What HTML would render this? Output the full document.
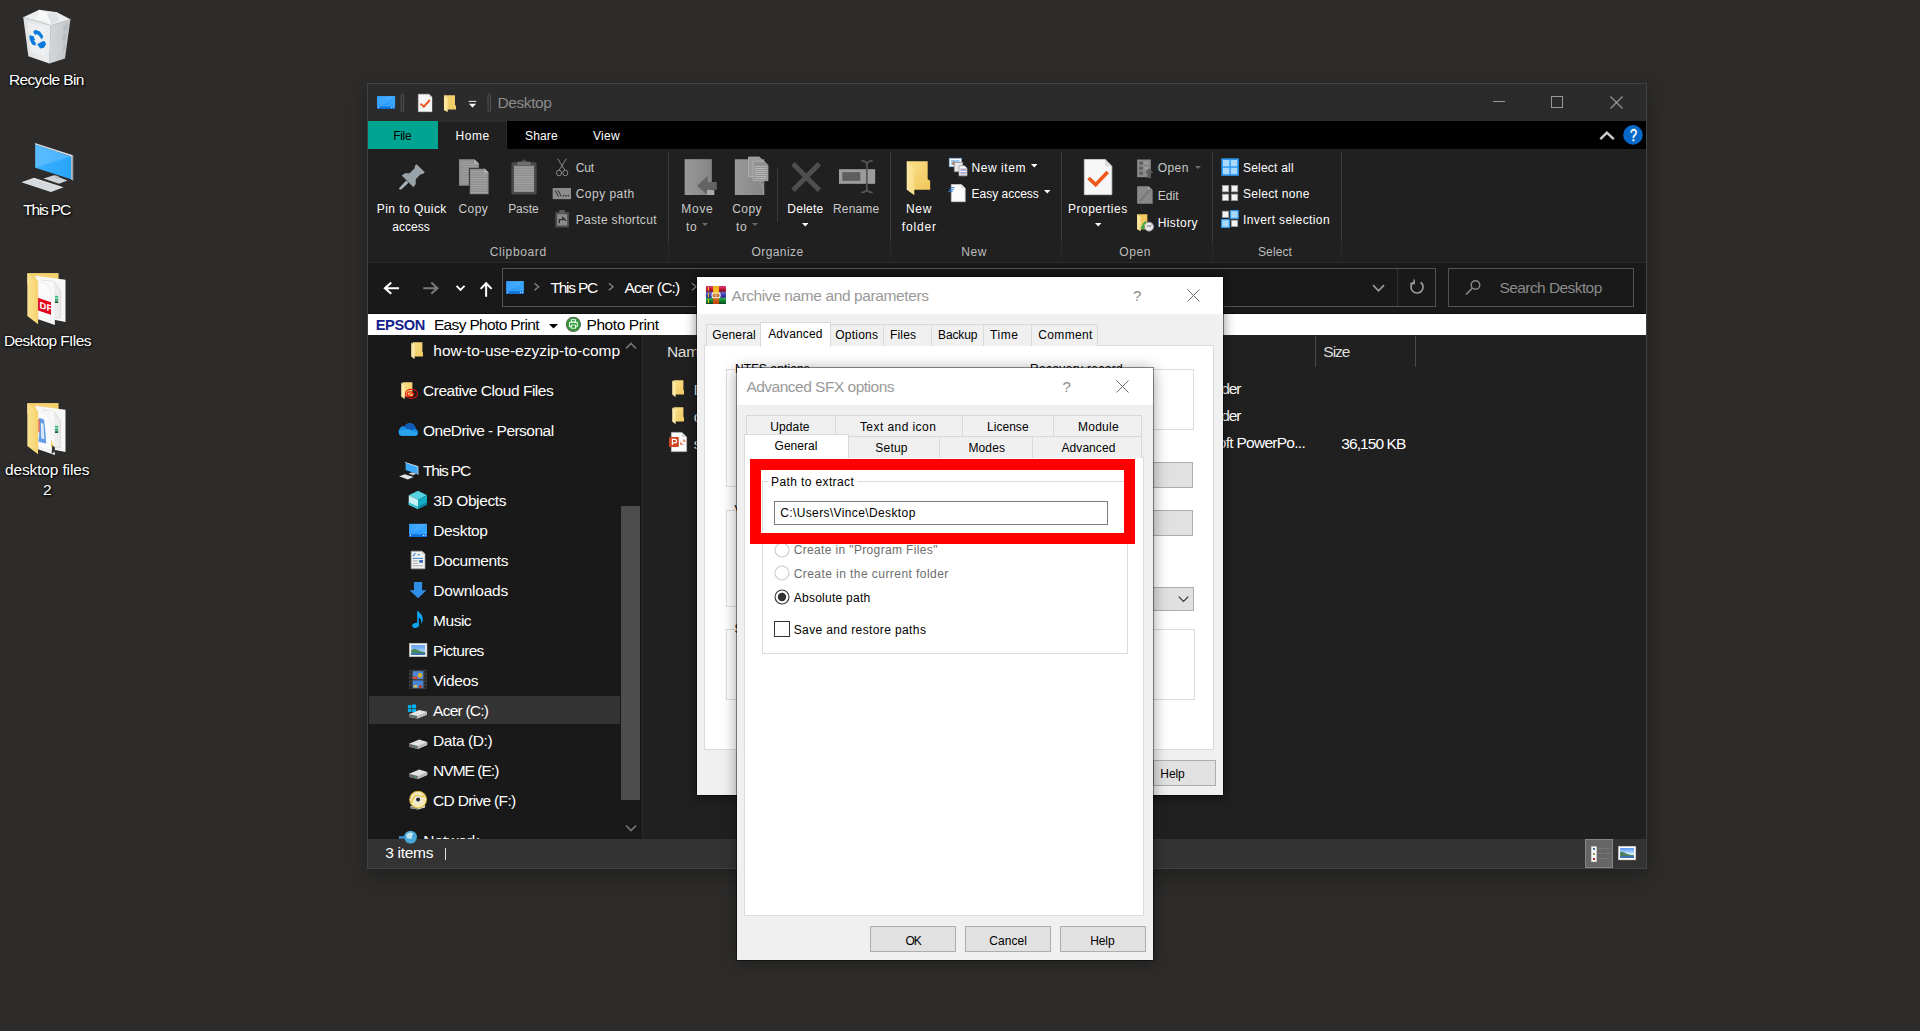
<!DOCTYPE html>
<html><head><meta charset="utf-8"><title>Desktop</title>
<style>
html,body{margin:0;padding:0;}
body{width:1920px;height:1031px;overflow:hidden;background:#2d2c2b;font-family:"Liberation Sans", sans-serif;position:relative;}
div,svg,span.t{position:absolute;box-sizing:border-box;}
span.t{white-space:pre;line-height:20px;height:20px;}
.win{overflow:hidden;}
</style></head><body>
<span class="t" style="left:9.00px;top:70.33px;font-size:15.5px;color:#ffffff;letter-spacing:-0.649px;text-shadow:1px 1px 2px #000,0 0 3px rgba(0,0,0,.8);">Recycle Bin</span>
<span class="t" style="left:23.20px;top:200.43px;font-size:15.5px;color:#ffffff;letter-spacing:-1.200px;text-shadow:1px 1px 2px #000,0 0 3px rgba(0,0,0,.8);">This PC</span>
<span class="t" style="left:4.00px;top:331.03px;font-size:15.5px;color:#ffffff;letter-spacing:-0.613px;text-shadow:1px 1px 2px #000,0 0 3px rgba(0,0,0,.8);">Desktop FIles</span>
<span class="t" style="left:5.00px;top:460.13px;font-size:15.5px;color:#ffffff;letter-spacing:-0.144px;text-shadow:1px 1px 2px #000,0 0 3px rgba(0,0,0,.8);">desktop files</span>
<span class="t" style="left:42.90px;top:480.33px;font-size:15.5px;color:#ffffff;letter-spacing:-1.125px;text-shadow:1px 1px 2px #000,0 0 3px rgba(0,0,0,.8);">2</span>
<svg style="left:10px;top:0px" width="80" height="70" viewBox="0 0 1178 1031"><defs><linearGradient id="rbL" x1="0" x2="1"><stop offset="0" stop-color="#dfe1e3"/><stop offset="1" stop-color="#eceef0"/></linearGradient>
<linearGradient id="rbR" x1="0" x2="1"><stop offset="0" stop-color="#d4d7d9"/><stop offset="1" stop-color="#c3c6c9"/></linearGradient></defs>
<polygon points="195,255 430,145 690,180 890,285 600,375" fill="#eceeef"/>
<polygon points="430,145 540,200 690,180 700,290 600,375 520,300 380,290" fill="#f7f8f8"/>
<polygon points="540,200 690,180 720,300 610,360" fill="#dfe2e4"/>
<polygon points="195,255 600,375 580,935 270,830" fill="url(#rbL)"/>
<polygon points="600,375 890,285 810,860 580,935" fill="url(#rbR)"/>
<polygon points="780,400 860,330 850,420 800,470 840,520 790,640 830,690 770,800 800,640 760,560 800,500" fill="#b4b7ba" opacity=".7"/>
<polygon points="260,330 520,400 540,600 500,820 300,760" fill="#f1f2f3" opacity=".7"/>
<path d="M195,255 L600,375 L890,285" fill="none" stroke="#c9cccf" stroke-width="14"/>
<path d="M600,375 L580,935" stroke="#d7d9db" stroke-width="8"/>
<g fill="#0a7bdc">
<polygon points="340,470 370,440 440,465 490,535 470,580 420,520 395,500 375,520"/>
<polygon points="285,520 345,530 370,590 350,600 380,630 375,672 325,655 290,580"/>
<polygon points="400,650 470,610 510,605 530,650 500,705 445,715"/>
</g>
</svg>
<svg style="left:10px;top:135px" width="80" height="65" viewBox="0 0 1269 1031"><defs><linearGradient id="pcS" x1="0" x2="1"><stop offset="0" stop-color="#3bb0ff"/><stop offset="1" stop-color="#27a5fb"/></linearGradient></defs>
<polygon points="180,750 380,680 850,830 650,905" fill="#dfe2e5"/>
<path d="M250,745 L690,880 M300,725 L740,862 M345,708 L790,845" stroke="#c3c7cb" stroke-width="10"/>
<polygon points="530,690 700,640 910,720 780,775" fill="#cdd3d8"/>
<polygon points="715,640 770,655 770,700 715,685" fill="#b9bec3"/>
<polygon points="395,125 1000,320 1000,720 970,705 970,340 395,150" fill="#d9dcdf"/>
<polygon points="985,318 1003,322 1003,722 985,715" fill="#9a9ea2"/>
<polygon points="400,150 970,340 970,700 400,520" fill="url(#pcS)"/>
<polygon points="400,150 970,340 400,520" fill="#ffffff" opacity=".16"/>
</svg>
<svg style="left:10px;top:265px" width="80" height="65" viewBox="0 0 1269 1031"><defs><linearGradient id="fdFa" x1="0" x2="1"><stop offset="0" stop-color="#fbe394"/><stop offset="1" stop-color="#f6d26c"/></linearGradient></defs>
<polygon points="275,128 770,128 770,300 275,300" fill="#f4d26f"/>
<polygon points="395,172 880,235 880,905 700,870" fill="#f7f7f7"/>
<polygon points="520,238 700,262 800,400 800,838 700,838" fill="#ececec" stroke="#b9b196" stroke-width="5"/>
<polygon points="712,490 765,490 765,520 712,520" fill="#35c487"/><polygon points="712,535 765,535 765,565 712,565" fill="#1e9d62"/><polygon points="712,575 765,575 765,602 712,602" fill="#0b5c38"/>
<polygon points="445,240 700,262 712,952 445,862" fill="#f8f8f8"/>
<polygon points="445,255 570,290 650,430 650,885 445,820" fill="#fbfbfb" stroke="#cfcfcf" stroke-width="4"/>
<polygon points="445,520 650,590 650,790 445,720" fill="#e3001b"/>
<text x="470" y="690" font-family="Liberation Sans" font-weight="bold" font-size="150" fill="#fff" transform="skewY(18) translate(0,-160)">DF</text>
<polygon points="275,135 445,255 445,940 275,810" fill="url(#fdFa)"/>
</svg>
<svg style="left:10px;top:395px" width="80" height="65" viewBox="0 0 1269 1031"><defs><linearGradient id="fdFb" x1="0" x2="1"><stop offset="0" stop-color="#fbe394"/><stop offset="1" stop-color="#f6d26c"/></linearGradient></defs>
<polygon points="275,128 770,128 770,300 275,300" fill="#f4d26f"/>
<polygon points="395,172 880,235 880,905 700,870" fill="#f7f7f7"/>
<polygon points="520,238 700,262 800,400 800,838 700,838" fill="#ececec" stroke="#b9b196" stroke-width="5"/>
<polygon points="712,490 765,490 765,520 712,520" fill="#35c487"/><polygon points="712,535 765,535 765,565 712,565" fill="#1e9d62"/><polygon points="712,575 765,575 765,602 712,602" fill="#0b5c38"/>
<polygon points="445,240 700,262 712,952 445,862" fill="#f8f8f8"/>
<polygon points="445,255 570,290 650,430 650,885 445,820" fill="#fbfbfb" stroke="#cfcfcf" stroke-width="4"/>
<polygon points="460,360 540,390 560,560 575,770 450,740 470,560" fill="#2d7fe0" opacity=".75"/>
<polygon points="490,440 530,455 545,700 495,685" fill="#dfeaf8"/>
<polygon points="445,380 475,390 475,600 445,590" fill="#e8604a" opacity=".8"/>
<polygon points="650,700 700,830 650,830" fill="#f2cf66"/><polygon points="670,800 712,830 712,905 660,930" fill="#333"/>
<polygon points="275,135 445,255 445,940 275,810" fill="url(#fdFb)"/>
</svg>
<div style="left:367px;top:83px;width:1280px;height:786px;background:#202020;border:1px solid #434343;box-shadow:0 6px 18px 0 rgba(0,0,0,.30);"></div>
<div style="left:368px;top:84px;width:1278px;height:37px;background:#2b2b2b;"></div>
<div style="left:368px;top:121px;width:1278px;height:28px;background:#000;"></div>
<div style="left:368px;top:121px;width:70px;height:28px;background:#00a592;"></div>
<div style="left:438px;top:121px;width:69px;height:29px;background:#202020;border:1px solid #2b2b2b;border-bottom:none;border-left:none;"></div>
<div style="left:368px;top:149px;width:1278px;height:113px;background:#202020;"></div>
<div style="left:368px;top:262px;width:1278px;height:1px;background:#2b2b2b;"></div>
<div style="left:368px;top:263px;width:1278px;height:51px;background:#191919;"></div>
<div style="left:368px;top:313px;width:1278px;height:1px;background:#0c0c0c;"></div>
<div style="left:368px;top:314px;width:1278px;height:21px;background:#ffffff;"></div>
<div style="left:368px;top:335px;width:274px;height:504px;background:#191919;"></div>
<div style="left:642px;top:335px;width:1px;height:504px;background:#2b2b2b;"></div>
<div style="left:643px;top:335px;width:1003px;height:504px;background:#202020;"></div>
<span class="t" style="left:497.60px;top:92.63px;font-size:15.5px;color:#8b8b8b;letter-spacing:-0.439px;">Desktop</span>
<span class="t" style="left:393.20px;top:126.04px;font-size:12px;color:#000;letter-spacing:-0.311px;">File</span>
<span class="t" style="left:455.40px;top:126.04px;font-size:12px;color:#ffffff;letter-spacing:0.621px;">Home</span>
<span class="t" style="left:525.00px;top:126.04px;font-size:12px;color:#ffffff;letter-spacing:0.174px;">Share</span>
<span class="t" style="left:593.00px;top:126.04px;font-size:12px;color:#ffffff;letter-spacing:0.276px;">View</span>
<span class="t" style="left:376.80px;top:199.14px;font-size:12px;color:#ffffff;letter-spacing:0.441px;">Pin to Quick</span>
<span class="t" style="left:392.30px;top:216.64px;font-size:12px;color:#ffffff;letter-spacing:0.023px;">access</span>
<span class="t" style="left:458.50px;top:199.14px;font-size:12px;color:#cacaca;letter-spacing:0.421px;">Copy</span>
<span class="t" style="left:508.20px;top:199.14px;font-size:12px;color:#cacaca;letter-spacing:-0.077px;">Paste</span>
<span class="t" style="left:575.70px;top:157.54px;font-size:12px;color:#cacaca;letter-spacing:-0.129px;">Cut</span>
<span class="t" style="left:575.70px;top:183.84px;font-size:12px;color:#cacaca;letter-spacing:0.477px;">Copy path</span>
<span class="t" style="left:575.70px;top:209.54px;font-size:12px;color:#cacaca;letter-spacing:0.313px;">Paste shortcut</span>
<span class="t" style="left:489.70px;top:241.64px;font-size:12px;color:#bdbdbd;letter-spacing:0.636px;">Clipboard</span>
<span class="t" style="left:681.30px;top:199.14px;font-size:12px;color:#cacaca;letter-spacing:0.714px;">Move</span>
<span class="t" style="left:686.00px;top:216.64px;font-size:12px;color:#cacaca;letter-spacing:0.642px;">to</span>
<span class="t" style="left:732.30px;top:199.14px;font-size:12px;color:#cacaca;letter-spacing:0.371px;">Copy</span>
<span class="t" style="left:736.00px;top:216.64px;font-size:12px;color:#cacaca;letter-spacing:0.642px;">to</span>
<span class="t" style="left:787.30px;top:199.14px;font-size:12px;color:#ffffff;letter-spacing:0.252px;">Delete</span>
<span class="t" style="left:833.00px;top:199.14px;font-size:12px;color:#cacaca;letter-spacing:0.157px;">Rename</span>
<span class="t" style="left:751.50px;top:241.64px;font-size:12px;color:#bdbdbd;letter-spacing:0.412px;">Organize</span>
<span class="t" style="left:906.00px;top:199.14px;font-size:12px;color:#ffffff;letter-spacing:0.661px;">New</span>
<span class="t" style="left:901.80px;top:216.64px;font-size:12px;color:#ffffff;letter-spacing:0.828px;">folder</span>
<span class="t" style="left:971.50px;top:157.54px;font-size:12px;color:#ffffff;letter-spacing:0.561px;">New item</span>
<span class="t" style="left:971.50px;top:183.84px;font-size:12px;color:#ffffff;letter-spacing:-0.005px;">Easy access</span>
<span class="t" style="left:961.30px;top:241.64px;font-size:12px;color:#bdbdbd;letter-spacing:0.495px;">New</span>
<span class="t" style="left:1068.00px;top:199.14px;font-size:12px;color:#ffffff;letter-spacing:0.500px;">Properties</span>
<span class="t" style="left:1157.70px;top:158.34px;font-size:12px;color:#cacaca;letter-spacing:0.435px;">Open</span>
<span class="t" style="left:1157.70px;top:185.54px;font-size:12px;color:#cacaca;letter-spacing:0.103px;">Edit</span>
<span class="t" style="left:1157.70px;top:212.54px;font-size:12px;color:#ffffff;letter-spacing:0.422px;">History</span>
<span class="t" style="left:1119.30px;top:241.64px;font-size:12px;color:#bdbdbd;letter-spacing:0.585px;">Open</span>
<span class="t" style="left:1243.00px;top:157.54px;font-size:12px;color:#ffffff;letter-spacing:0.210px;">Select all</span>
<span class="t" style="left:1243.00px;top:183.84px;font-size:12px;color:#ffffff;letter-spacing:0.301px;">Select none</span>
<span class="t" style="left:1243.00px;top:209.54px;font-size:12px;color:#ffffff;letter-spacing:0.393px;">Invert selection</span>
<span class="t" style="left:1258.00px;top:241.64px;font-size:12px;color:#bdbdbd;letter-spacing:0.107px;">Select</span>
<div style="left:668px;top:152px;width:1px;height:90px;background:#3a3a3a;"></div>
<div style="left:668px;top:242px;width:1px;height:17px;background:#2a2a2a;"></div>
<div style="left:890px;top:152px;width:1px;height:90px;background:#3a3a3a;"></div>
<div style="left:890px;top:242px;width:1px;height:17px;background:#2a2a2a;"></div>
<div style="left:1061px;top:152px;width:1px;height:90px;background:#3a3a3a;"></div>
<div style="left:1061px;top:242px;width:1px;height:17px;background:#2a2a2a;"></div>
<div style="left:1212px;top:152px;width:1px;height:90px;background:#3a3a3a;"></div>
<div style="left:1212px;top:242px;width:1px;height:17px;background:#2a2a2a;"></div>
<div style="left:1341px;top:152px;width:1px;height:90px;background:#3a3a3a;"></div>
<div style="left:1341px;top:242px;width:1px;height:17px;background:#2a2a2a;"></div>
<div style="left:777px;top:167px;width:1px;height:55px;background:#3a3a3a;"></div>
<svg style="left:702.0px;top:223.0px;" width="6" height="3.5" viewBox="0 0 6 3.5"><path d="M0 0H6L3.0 3Z" fill="#6a6a6a"/></svg>
<svg style="left:752.0px;top:223.0px;" width="6" height="3.5" viewBox="0 0 6 3.5"><path d="M0 0H6L3.0 3Z" fill="#6a6a6a"/></svg>
<svg style="left:801.75px;top:222.75px;" width="6.5" height="4.0" viewBox="0 0 6.5 4.0"><path d="M0 0H6.5L3.25 3.5Z" fill="#fff"/></svg>
<svg style="left:1094.75px;top:222.75px;" width="6.5" height="4.0" viewBox="0 0 6.5 4.0"><path d="M0 0H6.5L3.25 3.5Z" fill="#fff"/></svg>
<svg style="left:1030.75px;top:163.75px;" width="6.5" height="4.0" viewBox="0 0 6.5 4.0"><path d="M0 0H6.5L3.25 3.5Z" fill="#fff"/></svg>
<svg style="left:1043.75px;top:189.75px;" width="6.5" height="4.0" viewBox="0 0 6.5 4.0"><path d="M0 0H6.5L3.25 3.5Z" fill="#fff"/></svg>
<svg style="left:1195.0px;top:166.0px;" width="6" height="3.5" viewBox="0 0 6 3.5"><path d="M0 0H6L3.0 3Z" fill="#6a6a6a"/></svg>
<div style="left:502px;top:268px;width:934px;height:39px;background:#191919;border:1px solid #535353;"></div>
<div style="left:1397px;top:269px;width:1px;height:37px;background:#2f2f2f;"></div>
<div style="left:1448px;top:268px;width:186px;height:39px;background:#191919;border:1px solid #535353;"></div>
<span class="t" style="left:550.40px;top:278.13px;font-size:15.5px;color:#ffffff;letter-spacing:-1.200px;">This PC</span>
<span class="t" style="left:624.50px;top:278.13px;font-size:15.5px;color:#ffffff;letter-spacing:-0.778px;">Acer (C:)</span>
<span class="t" style="left:1499.50px;top:278.03px;font-size:15.5px;color:#8a8a8a;letter-spacing:-0.577px;">Search Desktop</span>
<span class="t" style="left:375.70px;top:314.94px;font-size:14.6px;color:#13218c;letter-spacing:-0.359px;font-weight:bold;">EPSON</span>
<span class="t" style="left:433.90px;top:315.33px;font-size:15.5px;color:#000;letter-spacing:-0.653px;">Easy Photo Print</span>
<span class="t" style="left:586.50px;top:315.33px;font-size:15.5px;color:#000;letter-spacing:-0.417px;">Photo Print</span>
<svg style="left:549px;top:323.5px;" width="9" height="5" viewBox="0 0 9 5"><path d="M0 0H9L4.5 4.6Z" fill="#000"/></svg>
<div style="left:369px;top:696px;width:251px;height:28px;background:#333333;"></div>
<div style="left:621px;top:506px;width:19px;height:294px;background:#4d4d4d;"></div>
<span class="t" style="left:433.30px;top:340.73px;font-size:15.5px;color:#ffffff;letter-spacing:-0.005px;">how-to-use-ezyzip-to-comp</span>
<span class="t" style="left:423.00px;top:380.63px;font-size:15.5px;color:#ffffff;letter-spacing:-0.463px;">Creative Cloud Files</span>
<span class="t" style="left:423.00px;top:420.83px;font-size:15.5px;color:#ffffff;letter-spacing:-0.517px;">OneDrive - Personal</span>
<span class="t" style="left:423.00px;top:460.73px;font-size:15.5px;color:#ffffff;letter-spacing:-1.161px;">This PC</span>
<span class="t" style="left:433.30px;top:491.13px;font-size:15.5px;color:#ffffff;letter-spacing:-0.397px;">3D Objects</span>
<span class="t" style="left:433.30px;top:521.03px;font-size:15.5px;color:#ffffff;letter-spacing:-0.368px;">Desktop</span>
<span class="t" style="left:433.30px;top:550.93px;font-size:15.5px;color:#ffffff;letter-spacing:-0.412px;">Documents</span>
<span class="t" style="left:433.30px;top:580.93px;font-size:15.5px;color:#ffffff;letter-spacing:-0.221px;">Downloads</span>
<span class="t" style="left:433.10px;top:610.93px;font-size:15.5px;color:#ffffff;letter-spacing:-0.497px;">Music</span>
<span class="t" style="left:433.10px;top:641.03px;font-size:15.5px;color:#ffffff;letter-spacing:-0.675px;">Pictures</span>
<span class="t" style="left:433.10px;top:671.13px;font-size:15.5px;color:#ffffff;letter-spacing:-0.354px;">Videos</span>
<span class="t" style="left:433.10px;top:701.13px;font-size:15.5px;color:#ffffff;letter-spacing:-0.767px;">Acer (C:)</span>
<span class="t" style="left:433.10px;top:731.23px;font-size:15.5px;color:#ffffff;letter-spacing:-0.419px;">Data (D:)</span>
<span class="t" style="left:433.10px;top:761.03px;font-size:15.5px;color:#ffffff;letter-spacing:-0.974px;">NVME (E:)</span>
<span class="t" style="left:433.10px;top:791.13px;font-size:15.5px;color:#ffffff;letter-spacing:-0.683px;">CD Drive (F:)</span>
<span class="t" style="left:423.30px;top:831.13px;font-size:15.5px;color:#ffffff;letter-spacing:-0.094px;">Network</span>
<span class="t" style="left:667.00px;top:341.83px;font-size:15.5px;color:#dedede;letter-spacing:-0.340px;">Name</span>
<span class="t" style="left:1323.30px;top:341.83px;font-size:15.5px;color:#dedede;letter-spacing:-0.989px;">Size</span>
<div style="left:1315px;top:336px;width:1px;height:31px;background:#4a4a4a;"></div>
<div style="left:1415px;top:336px;width:1px;height:31px;background:#4a4a4a;"></div>
<span class="t" style="left:693.80px;top:379.63px;font-size:15.5px;color:#ffffff;letter-spacing:-0.736px;">Desktop FIles</span>
<span class="t" style="left:693.80px;top:406.63px;font-size:15.5px;color:#ffffff;letter-spacing:-0.260px;">desktop files 2</span>
<span class="t" style="left:693.80px;top:433.63px;font-size:15.5px;color:#ffffff;letter-spacing:-0.795px;">sample</span>
<span class="t" style="left:1221.30px;top:379.33px;font-size:15.5px;color:#ffffff;letter-spacing:-1.200px;">der</span>
<span class="t" style="left:1221.30px;top:406.23px;font-size:15.5px;color:#ffffff;letter-spacing:-1.200px;">der</span>
<span class="t" style="left:1217.80px;top:433.43px;font-size:15.5px;color:#ffffff;letter-spacing:-0.726px;">oft PowerPo...</span>
<span class="t" style="left:1341.30px;top:433.53px;font-size:15.5px;color:#ffffff;letter-spacing:-0.923px;">36,150 KB</span>
<div style="left:368px;top:839px;width:1278px;height:29px;background:#333333;"></div>
<span class="t" style="left:385.30px;top:843.23px;font-size:15.5px;color:#ffffff;letter-spacing:-0.310px;">3 items</span>
<div style="left:445px;top:848px;width:1px;height:12px;background:#e0e0e0;"></div>
<div style="left:1585px;top:839px;width:28px;height:29px;background:#666666;border:1px solid #858585;"></div>
<svg style="left:360px;top:76px" width="160" height="90" viewBox="0 0 1833 1031"><defs><linearGradient id="tbB" x1="0" x2="1"><stop offset="0" stop-color="#1e96ff"/><stop offset="1" stop-color="#3aa7ff"/></linearGradient></defs>
<rect x="195" y="230" width="207" height="148" fill="url(#tbB)"/>
<polygon points="195,230 402,230 195,378" fill="#fff" opacity=".10"/>
<rect x="195" y="352" width="207" height="26" fill="#0f6fd6"/>
<rect x="205" y="356" width="12" height="10" fill="#fff"/><rect x="355" y="356" width="10" height="10" fill="#fff"/><rect x="378" y="356" width="10" height="10" fill="#fff"/>
<rect x="472" y="210" width="28" height="198" rx="12" fill="none" stroke="#6e6e6e" stroke-width="7"/>
<rect x="1467" y="210" width="28" height="198" rx="12" fill="none" stroke="#6e6e6e" stroke-width="7"/>
<polygon points="668,208 790,208 825,243 825,409 668,409" fill="#f6f6f6" stroke="#d8d8d8" stroke-width="5"/>
<polygon points="790,205 790,243 828,243" fill="#d4d4d4"/>
<path d="M693,318 L732,352 L800,275" fill="none" stroke="#f0581b" stroke-width="22"/>
<polygon points="962,220 1088,220 1088,330 1100,345 1100,385 962,385" fill="#f3cf6a"/>
<polygon points="962,220 1005,250 1005,412 962,392" fill="#fbe59a"/>
<rect x="1245" y="285" width="87" height="11" fill="#fff"/>
<polygon points="1248,318 1330,318 1289,360" fill="#fff"/>
</svg>
<div style="left:1493px;top:101px;width:12px;height:1px;background:#9a9a9a;"></div>
<div style="left:1551px;top:96px;width:12px;height:12px;border:1px solid #9a9a9a;"></div>
<svg style="left:1609.5px;top:95.5px;" width="13" height="13" viewBox="0 0 13 13"><path d="M0.5 0.5L12.5 12.5M12.5 0.5L0.5 12.5" stroke="#9a9a9a" stroke-width="1.1"/></svg>
<svg style="left:1599px;top:128.9px;" width="16" height="12" viewBox="0 0 16 12"><path d="M1.3 10.1L7.9 3.6L14.75 10.1" fill="none" stroke="#cfcfcf" stroke-width="2.3"/></svg>
<svg style="left:1623px;top:125px;" width="20" height="20" viewBox="0 0 20 20"><circle cx="10" cy="9.9" r="9.8" fill="#0669ca"/></svg>
<span class="t" style="left:1630.20px;top:125.91px;font-size:17px;color:#fff;transform:scaleX(.74);transform-origin:0 0;-webkit-text-stroke:0.45px #fff;">?</span>
<svg style="left:366px;top:145px" width="320" height="125" viewBox="0 0 1920 750">
<polygon points="558,85 650,85 678,112 678,245 558,245" fill="#8e8e8e"/>
<polygon points="650,85 650,112 678,112" fill="#b5b5b5"/>
<rect x="568" y="100" width="100" height="5" fill="#a6a6a6"/><rect x="568" y="114" width="100" height="5" fill="#a6a6a6"/><rect x="568" y="128" width="100" height="5" fill="#a6a6a6"/><rect x="568" y="142" width="100" height="5" fill="#a6a6a6"/><rect x="568" y="156" width="100" height="5" fill="#a6a6a6"/><rect x="568" y="170" width="100" height="5" fill="#a6a6a6"/><rect x="568" y="184" width="100" height="5" fill="#a6a6a6"/><rect x="568" y="198" width="100" height="5" fill="#a6a6a6"/><rect x="568" y="212" width="100" height="5" fill="#a6a6a6"/><rect x="568" y="226" width="100" height="5" fill="#a6a6a6"/>
<polygon points="620,140 710,140 738,167 738,298 620,298" fill="#8e8e8e" stroke="#202020" stroke-width="5"/>
<polygon points="710,140 710,167 738,167" fill="#b5b5b5"/>
<rect x="630" y="156" width="98" height="5" fill="#a9a9a9"/><rect x="630" y="170" width="98" height="5" fill="#a9a9a9"/><rect x="630" y="184" width="98" height="5" fill="#a9a9a9"/><rect x="630" y="198" width="98" height="5" fill="#a9a9a9"/><rect x="630" y="212" width="98" height="5" fill="#a9a9a9"/><rect x="630" y="226" width="98" height="5" fill="#a9a9a9"/><rect x="630" y="240" width="98" height="5" fill="#a9a9a9"/><rect x="630" y="254" width="98" height="5" fill="#a9a9a9"/><rect x="630" y="268" width="98" height="5" fill="#a9a9a9"/><rect x="630" y="282" width="98" height="5" fill="#a9a9a9"/>
<rect x="872" y="103" width="152" height="194" rx="10" fill="#4a4a4a"/>
<polygon points="925,108 948,84 972,108" fill="#4a4a4a"/>
<rect x="908" y="100" width="80" height="20" fill="#6e6e6e"/>
<rect x="888" y="124" width="120" height="158" fill="#8e8e8e"/>
<rect x="888" y="130" width="120" height="5" fill="#a6a6a6"/><rect x="888" y="144" width="120" height="5" fill="#a6a6a6"/><rect x="888" y="158" width="120" height="5" fill="#a6a6a6"/><rect x="888" y="172" width="120" height="5" fill="#a6a6a6"/><rect x="888" y="186" width="120" height="5" fill="#a6a6a6"/><rect x="888" y="200" width="120" height="5" fill="#a6a6a6"/><rect x="888" y="214" width="120" height="5" fill="#a6a6a6"/><rect x="888" y="228" width="120" height="5" fill="#a6a6a6"/><rect x="888" y="242" width="120" height="5" fill="#a6a6a6"/><rect x="888" y="256" width="120" height="5" fill="#a6a6a6"/><rect x="888" y="270" width="120" height="5" fill="#a6a6a6"/>
<g fill="none" stroke="#8a8a8a" stroke-width="6">
<path d="M1150,82 L1194,152"/><path d="M1202,82 L1158,152"/>
<ellipse cx="1158" cy="168" rx="15" ry="17"/><ellipse cx="1196" cy="168" rx="15" ry="17"/>
</g>
<rect x="1120" y="258" width="110" height="67" fill="#8c8c8c"/>
<path d="M1135,272 L1155,310 M1152,272 L1172,310" stroke="#2a2a2a" stroke-width="6"/>
<rect x="1182" y="300" width="8" height="8" fill="#2a2a2a"/><rect x="1196" y="300" width="8" height="8" fill="#2a2a2a"/><rect x="1210" y="300" width="8" height="8" fill="#2a2a2a"/>
<rect x="1136" y="402" width="82" height="93" rx="6" fill="#4d4d4d"/>
<rect x="1160" y="390" width="34" height="22" rx="5" fill="#5c5c5c"/>
<rect x="1147" y="415" width="60" height="68" fill="#8a8a8a"/>
<path d="M1160,470 L1160,448 L1180,448 L1180,436 L1200,455" fill="none" stroke="#2e2e2e" stroke-width="8"/>
</svg>
<svg style="left:666px;top:145px" width="320" height="125" viewBox="0 0 1920 750"><defs><linearGradient id="mvG" x1="0" x2="1"><stop offset="0" stop-color="#999"/><stop offset="1" stop-color="#858585"/></linearGradient>
<linearGradient id="nfB" x1="0" x2="1" y1="0" y2="1"><stop offset="0" stop-color="#fbe08a"/><stop offset="1" stop-color="#f0c65a"/></linearGradient>
<linearGradient id="nfF" x1="0" x2="1"><stop offset="0" stop-color="#fdeaa6"/><stop offset="1" stop-color="#f9dc84"/></linearGradient></defs>
<rect x="112" y="85" width="163" height="215" fill="url(#mvG)"/>
<polygon points="305,222 250,222 250,186 186,245 250,302 250,268 305,268" fill="#636363"/>
<rect x="246" y="270" width="44" height="30" fill="#a9a9a9"/>
<polygon points="413,85 590,85 590,300 413,300" fill="url(#mvG)"/>
<path d="M560,230 Q585,230 585,300" fill="none" stroke="#a5a5a5" stroke-width="6"/>
<polygon points="495,72 560,72 585,97 585,190 495,190" fill="#9a9a9a" stroke="#b9b9b9" stroke-width="4"/>
<polygon points="522,97 588,97 612,122 612,214 522,214" fill="#929292" stroke="#bdbdbd" stroke-width="4"/>
<rect x="532" y="128" width="70" height="4" fill="#c9c9c9"/><rect x="532" y="140" width="70" height="4" fill="#c9c9c9"/><rect x="532" y="152" width="70" height="4" fill="#c9c9c9"/><rect x="532" y="164" width="70" height="4" fill="#c9c9c9"/><rect x="532" y="176" width="70" height="4" fill="#c9c9c9"/><rect x="532" y="188" width="70" height="4" fill="#c9c9c9"/><rect x="532" y="200" width="70" height="4" fill="#c9c9c9"/>
<path d="M762,112 L920,272 M920,112 L762,272" stroke="#4e4e4e" stroke-width="30"/>
<rect x="1038" y="145" width="217" height="88" fill="#9c9c9c"/>
<rect x="1058" y="163" width="108" height="52" fill="#5e5e5e"/>
<path d="M1205,100 L1205,280 M1172,95 Q1205,95 1205,120 Q1205,95 1240,95 M1172,285 Q1205,285 1205,260 Q1205,285 1240,285" fill="none" stroke="#565656" stroke-width="10"/>
<polygon points="1445,97 1570,97 1570,205 1585,215 1585,268 1445,268" fill="url(#nfB)"/>
<polygon points="1445,97 1490,135 1490,302 1445,268" fill="url(#nfF)"/>
</svg>
<svg style="left:936px;top:145px" width="320" height="125" viewBox="0 0 1920 750">
<rect x="80" y="80" width="72" height="50" fill="#fff" stroke="#8fb8e0" stroke-width="5"/>
<rect x="90" y="90" width="52" height="30" fill="#9cc7ee"/><rect x="100" y="100" width="14" height="20" fill="#c46a3a"/><rect x="118" y="104" width="20" height="16" fill="#6aa84f"/>
<rect x="110" y="105" width="50" height="55" fill="#e9e9e9" stroke="#9a9a9a" stroke-width="5"/>
<polygon points="138,125 172,125 186,139 186,185 138,185" fill="#fff" stroke="#9a9a9a" stroke-width="5"/>
<rect x="146" y="142" width="34" height="4" fill="#5b7fd0"/><rect x="146" y="152" width="34" height="4" fill="#5b7fd0"/><rect x="146" y="162" width="34" height="4" fill="#5b7fd0"/><rect x="146" y="172" width="34" height="4" fill="#5b7fd0"/><rect x="146" y="147" width="34" height="3" fill="#e07c7c"/><rect x="146" y="167" width="34" height="3" fill="#e07c7c"/>
<polygon points="92,237 152,237 175,260 175,340 92,340" fill="#fbfbfb" stroke="#c9c9c9" stroke-width="5"/>
<polygon points="152,237 152,260 175,260" fill="#d9d9d9"/>
<path d="M85,256 L112,256 M78,268 L106,268 M72,280 L100,280" stroke="#2b7fd6" stroke-width="6"/>
<polygon points="890,87 1015,87 1055,127 1055,298 890,298" fill="#f6f6f6" stroke="#d0d0d0" stroke-width="5"/>
<polygon points="1015,87 1015,127 1055,127" fill="#dcdcdc"/>
<path d="M915,198 L958,238 L1030,162" fill="none" stroke="#f0581b" stroke-width="22"/>
<rect x="1207" y="87" width="82" height="106" fill="#8a8a8a"/>
<rect x="1220" y="100" width="20" height="18" fill="#5a5a5a"/><rect x="1220" y="130" width="20" height="18" fill="#5a5a5a"/><rect x="1220" y="160" width="20" height="18" fill="#5a5a5a"/>
<rect x="1248" y="104" width="30" height="8" fill="#a5a5a5"/><rect x="1248" y="134" width="30" height="8" fill="#a5a5a5"/>
<polygon points="1280,140 1304,168 1290,168 1290,198 1268,198 1268,168 1255,168" fill="#5c5c5c"/>
<polygon points="1207,247 1275,247 1300,272 1300,353 1207,353" fill="#8a8a8a"/>
<polygon points="1275,247 1275,272 1300,272" fill="#b0b0b0"/>
<path d="M1222,338 L1292,262" stroke="#6a6a6a" stroke-width="12"/><path d="M1222,338 L1292,262" stroke="#9a9a9a" stroke-width="4"/>
<polygon points="1207,415 1268,415 1268,480 1275,490 1275,505 1207,505" fill="#f0c95f"/>
<polygon points="1207,415 1228,432 1228,518 1207,505" fill="#fbe59a"/>
<circle cx="1278" cy="490" r="27" fill="#e8e8e8" stroke="#9a9a9a" stroke-width="5"/>
<path d="M1265,492 L1275,480 L1282,492 L1292,478" fill="none" stroke="#555" stroke-width="4"/>
<path d="M1262,462 Q1238,470 1240,500 L1228,492 M1240,500 L1252,490" fill="none" stroke="#27a844" stroke-width="9"/>
<rect x="1712" y="80" width="105" height="105" fill="#2f9bf2"/>
<rect x="1722" y="90" width="38" height="38" fill="#a9d9ff"/><rect x="1769" y="90" width="38" height="38" fill="#a9d9ff"/><rect x="1722" y="137" width="38" height="38" fill="#a9d9ff"/><rect x="1769" y="137" width="38" height="38" fill="#a9d9ff"/>
<g fill="#f4f4f4" stroke="#a0a0a0" stroke-width="5">
<rect x="1718" y="243" width="38" height="38"/><rect x="1772" y="243" width="38" height="38"/><rect x="1718" y="295" width="38" height="38"/><rect x="1772" y="295" width="38" height="38"/>
<rect x="1718" y="397" width="38" height="38"/><rect x="1772" y="451" width="38" height="38"/>
</g>
<g fill="#a9d9ff" stroke="#2f9bf2" stroke-width="7">
<rect x="1767" y="394" width="46" height="46"/><rect x="1714" y="448" width="46" height="46"/>
</g>
</svg>
<svg style="left:368px;top:262px" width="340" height="80" viewBox="0 0 1920 452"><defs><linearGradient id="adB" x1="0" x2="1"><stop offset="0" stop-color="#1e96ff"/><stop offset="1" stop-color="#3aa7ff"/></linearGradient></defs>
<path d="M175,148 L95,148 M131,116 L95,148 L131,180" fill="none" stroke="#fff" stroke-width="11.5"/>
<path d="M312,148 L392,148 M357,116 L392,148 L357,180" fill="none" stroke="#7a7a7a" stroke-width="11.5"/>
<path d="M500,135 L522,158 L545,135" fill="none" stroke="#fff" stroke-width="10.5"/>
<path d="M667,196 L667,120 M636,152 L667,120 L698,152" fill="none" stroke="#fff" stroke-width="11.5"/>
<rect x="780" y="108" width="100" height="72" fill="url(#adB)"/>
<polygon points="780,108 880,108 780,180" fill="#fff" opacity=".10"/>
<rect x="780" y="166" width="100" height="14" fill="#0f6fd6"/>
<rect x="786" y="169" width="6" height="6" fill="#fff"/><rect x="858" y="169" width="5" height="6" fill="#fff"/><rect x="869" y="169" width="5" height="6" fill="#fff"/>
<g fill="none" stroke="#8a8a8a" stroke-width="7">
<path d="M940,120 L964,140 L940,160"/><path d="M1360,120 L1384,140 L1360,160"/><path d="M1830,120 L1854,140 L1830,160"/></g>
<circle cx="1160" cy="352" r="40" fill="#2e9d33" stroke="#5a6b5a" stroke-width="6"/>
<rect x="1138" y="340" width="44" height="26" rx="4" fill="none" stroke="#fff" stroke-width="6"/>
<rect x="1148" y="326" width="24" height="14" fill="none" stroke="#fff" stroke-width="5"/>
<rect x="1148" y="356" width="24" height="18" fill="#2e9d33" stroke="#fff" stroke-width="5"/>
</svg>
<svg style="left:1372px;top:284px;" width="13" height="9" viewBox="0 0 13 9"><path d="M1 1.2L6.5 6.8L12 1.2" fill="none" stroke="#9a9a9a" stroke-width="1.7"/></svg>
<svg style="left:1408px;top:278px;" width="18" height="19" viewBox="0 0 18 19"><path d="M12.6 4.2 A6 6 0 1 1 5.6 4.1" fill="none" stroke="#9a9a9a" stroke-width="1.7"/><path d="M6.2 1.5V5.6H2.2" fill="none" stroke="#9a9a9a" stroke-width="1.5"/></svg>
<svg style="left:1465px;top:279px;" width="17" height="17" viewBox="0 0 17 17"><circle cx="10.5" cy="6" r="4.3" fill="none" stroke="#8a8a8a" stroke-width="1.4"/><path d="M7.3 9.2L1 15.5" stroke="#8a8a8a" stroke-width="1.6"/></svg>
<svg style="left:625px;top:342px;" width="12" height="8" viewBox="0 0 12 8"><path d="M1 6.5L6 1.5L11 6.5" fill="none" stroke="#777" stroke-width="1.6"/></svg>
<svg style="left:625px;top:824px;" width="12" height="8" viewBox="0 0 12 8"><path d="M1 1.5L6 6.5L11 1.5" fill="none" stroke="#777" stroke-width="1.6"/></svg>
<svg style="left:410.8px;top:341.8px" width="12.6" height="17.4" viewBox="0 0 12.6 17.4">
<defs><linearGradient id="sfb1" x1="0" x2="1" y1="0" y2="1"><stop offset="0" stop-color="#fbe08c"/><stop offset="1" stop-color="#f1c95f"/></linearGradient></defs>
<polygon points="1.6,0.3 11.4,0.3 11.4,9.8 12.4,10.8 12.4,14.6 1.6,14.6" fill="url(#sfb1)"/>
<polygon points="0.2,0.5 3.6,3.1 3.6,17.2 0.2,14.6" fill="#fdeaa8"/></svg>
<svg style="left:400.6px;top:381.8px" width="12.6" height="17.4" viewBox="0 0 12.6 17.4">
<defs><linearGradient id="sfb2" x1="0" x2="1" y1="0" y2="1"><stop offset="0" stop-color="#fbe08c"/><stop offset="1" stop-color="#f1c95f"/></linearGradient></defs>
<polygon points="1.6,0.3 11.4,0.3 11.4,9.8 12.4,10.8 12.4,14.6 1.6,14.6" fill="url(#sfb2)"/>
<polygon points="0.2,0.5 3.6,3.1 3.6,17.2 0.2,14.6" fill="#fdeaa8"/></svg>
<svg style="left:671.7px;top:379.7px" width="12.6" height="17.4" viewBox="0 0 12.6 17.4">
<defs><linearGradient id="sfb3" x1="0" x2="1" y1="0" y2="1"><stop offset="0" stop-color="#fbe08c"/><stop offset="1" stop-color="#f1c95f"/></linearGradient></defs>
<polygon points="1.6,0.3 11.4,0.3 11.4,9.8 12.4,10.8 12.4,14.6 1.6,14.6" fill="url(#sfb3)"/>
<polygon points="0.2,0.5 3.6,3.1 3.6,17.2 0.2,14.6" fill="#fdeaa8"/></svg>
<svg style="left:671.7px;top:406.8px" width="12.6" height="17.4" viewBox="0 0 12.6 17.4">
<defs><linearGradient id="sfb4" x1="0" x2="1" y1="0" y2="1"><stop offset="0" stop-color="#fbe08c"/><stop offset="1" stop-color="#f1c95f"/></linearGradient></defs>
<polygon points="1.6,0.3 11.4,0.3 11.4,9.8 12.4,10.8 12.4,14.6 1.6,14.6" fill="url(#sfb4)"/>
<polygon points="0.2,0.5 3.6,3.1 3.6,17.2 0.2,14.6" fill="#fdeaa8"/></svg>
<svg style="left:394px;top:336px" width="50" height="150" viewBox="0 0 344 1031">
<g fill="none" stroke="#e41414" stroke-width="7"><ellipse cx="120" cy="398" rx="42" ry="32"/><ellipse cx="112" cy="400" rx="22" ry="17"/><path d="M100,412 Q120,380 140,398"/></g>
<path d="M40,680 Q22,660 40,635 Q50,615 72,622 Q90,592 122,602 Q148,612 148,640 Q168,648 164,668 Q160,686 140,686 L52,686 Z" fill="#1a8fe3"/>
<path d="M72,622 Q90,592 122,602 Q148,612 148,640 L100,655 Z" fill="#0f5db8"/>
<path d="M40,680 Q30,672 40,650 L100,640 L164,668 Q160,686 140,686 L52,686 Z" fill="#2aa3ef"/>
<polygon points="80,870 165,898 165,950 80,922" fill="#3daafc"/>
<polygon points="76,866 168,896 168,956 162,954 162,900 76,872" fill="#d5d9dc"/>
<polygon points="35,965 75,950 135,970 95,986" fill="#dfe2e5"/>
<polygon points="100,945 125,937 155,948 130,957" fill="#c5cacf"/>
</svg>
<svg style="left:400px;top:486px" width="40" height="120" viewBox="0 0 344 1031"><defs><linearGradient id="nvB" x1="0" x2="1"><stop offset="0" stop-color="#1e96ff"/><stop offset="1" stop-color="#3aa7ff"/></linearGradient></defs>
<polygon points="155,40 232,80 155,118 75,80" fill="#55d3e2"/>
<polygon points="75,80 155,118 155,198 75,160" fill="#c8f0f4"/>
<polygon points="155,118 232,80 232,160 155,198" fill="#15aac6"/>
<polygon points="75,140 155,175 155,198 75,160" fill="#39c2d4"/>
<polygon points="155,175 232,140 232,160 155,198" fill="#0d839c"/>
<rect x="78" y="325" width="154" height="113" fill="url(#nvB)"/>
<polygon points="78,325 232,325 78,438" fill="#fff" opacity=".10"/>
<rect x="78" y="416" width="154" height="22" fill="#0f6fd6"/>
<rect x="86" y="421" width="9" height="8" fill="#fff"/><rect x="198" y="421" width="8" height="8" fill="#fff"/><rect x="214" y="421" width="8" height="8" fill="#fff"/>
<polygon points="96,560 190,560 215,585 215,712 96,712" fill="#f2f2f2" stroke="#9c9c9c" stroke-width="6"/>
<polygon points="190,560 190,585 215,585" fill="#cfcfcf"/>
<path d="M112,605 L132,575 M150,590 L170,590" stroke="#2a7fd8" stroke-width="9"/>
<rect x="110" y="618" width="88" height="8" fill="#2a7fd8"/><rect x="110" y="640" width="45" height="7" fill="#9a9a9a"/><rect x="165" y="636" width="33" height="24" fill="#3b6fb0"/>
<rect x="110" y="660" width="45" height="7" fill="#9a9a9a"/><rect x="110" y="682" width="88" height="7" fill="#9a9a9a"/>
<polygon points="120,825 190,825 190,895 228,895 155,965 82,895 120,895" fill="#2f8fe8"/>
</svg>
<svg style="left:400px;top:606px" width="40" height="120" viewBox="0 0 344 1031"><defs><linearGradient id="pcSky" x1="0" x2="0" y1="0" y2="1"><stop offset="0" stop-color="#5a9cf0"/><stop offset="1" stop-color="#d8ecfa"/></linearGradient></defs>
<ellipse cx="135" cy="166" rx="31" ry="21" fill="#0ea5f5" transform="rotate(-20 135 166)"/>
<rect x="148" y="45" width="14" height="122" fill="#0ea5f5"/>
<path d="M150,45 Q200,70 196,120 Q194,140 184,152 Q188,110 150,88 Z" fill="#0ea5f5"/>
<rect x="80" y="320" width="152" height="116" fill="#f1f1f1" stroke="#bdbdbd" stroke-width="5"/>
<rect x="96" y="336" width="120" height="84" fill="url(#pcSky)"/>
<path d="M96,380 Q125,355 150,378 Q180,395 216,395 L216,420 L96,420 Z" fill="#4a8a5a"/>
<rect x="96" y="404" width="120" height="16" fill="#3b74b8"/>
<rect x="78" y="548" width="154" height="164" fill="#3c3c3c"/>
<g fill="#1f1f1f"><rect x="85" y="560" width="16" height="16"/><rect x="85" y="592" width="16" height="16"/><rect x="85" y="624" width="16" height="16"/><rect x="85" y="656" width="16" height="16"/><rect x="85" y="688" width="16" height="16"/>
<rect x="209" y="560" width="16" height="16"/><rect x="209" y="592" width="16" height="16"/><rect x="209" y="624" width="16" height="16"/><rect x="209" y="656" width="16" height="16"/><rect x="209" y="688" width="16" height="16"/></g>
<rect x="110" y="560" width="90" height="68" fill="#4a86d8"/><rect x="110" y="640" width="90" height="66" fill="#4a86d8"/>
<circle cx="172" cy="596" r="20" fill="#d8b030"/><rect x="110" y="606" width="40" height="22" fill="#d05030"/><circle cx="176" cy="692" r="14" fill="#c03828"/><rect x="118" y="680" width="30" height="20" fill="#e0c040"/>
<g fill="#00b4f2"><rect x="68" y="852" width="30" height="26"/><rect x="104" y="846" width="34" height="32"/><rect x="68" y="884" width="30" height="26"/><rect x="104" y="884" width="34" height="28"/></g>
<polygon points="78,930 165,893 232,910 232,935 150,968 78,955" fill="#e4e4e4"/>
<polygon points="78,930 150,945 150,968 78,955" fill="#6a6a6a"/>
<polygon points="150,945 232,910 232,935 150,968" fill="#bcbcbc"/>
<rect x="125" y="943" width="10" height="9" fill="#22c040"/>
</svg>
<svg style="left:396px;top:726px" width="40" height="120" viewBox="0 0 344 1031"><g transform="translate(0,0)"><polygon points="112,152 200,115 268,138 268,162 188,198 112,178" fill="#e2e2e2"/>
<polygon points="112,152 188,172 188,198 112,178" fill="#6a6a6a"/><polygon points="188,172 268,138 268,162 188,198" fill="#bababa"/>
<rect x="162" y="173" width="11" height="9" fill="#22c040"/></g><g transform="translate(0,258)"><polygon points="112,152 200,115 268,138 268,162 188,198 112,178" fill="#e2e2e2"/>
<polygon points="112,152 188,172 188,198 112,178" fill="#6a6a6a"/><polygon points="188,172 268,138 268,162 188,198" fill="#bababa"/>
<rect x="162" y="173" width="11" height="9" fill="#22c040"/></g>
<polygon points="125,690 190,670 250,682 250,700 190,718 125,706" fill="#dcdcdc"/>
<polygon points="125,690 190,702 190,718 125,706" fill="#8a8a8a"/>
<circle cx="190" cy="632" r="72" fill="#f4e9b8" stroke="#d9b63a" stroke-width="9"/>
<path d="M135,660 Q150,590 190,600 Q230,610 245,600" fill="none" stroke="#e3bd2c" stroke-width="10"/>
<circle cx="190" cy="632" r="30" fill="#e6e6e6"/><circle cx="190" cy="632" r="17" fill="#222"/>
<circle cx="125" cy="955" r="55" fill="#4aa8d8"/>
<path d="M90,930 Q120,905 150,925 Q130,945 140,968 L100,968 Q85,950 90,930" fill="#bfe3f2"/>
<rect x="25" y="948" width="50" height="20" fill="#3d9be0"/>
</svg>
<svg style="left:660px;top:372px" width="40" height="90" viewBox="0 0 458 1031">
<polygon points="130,692 250,692 305,745 305,912 130,912" fill="#fafafa" stroke="#cfcfcf" stroke-width="6"/>
<polygon points="250,692 250,745 305,745" fill="#d9d9d9"/>
<rect x="103" y="745" width="112" height="113" rx="10" fill="#d04423"/>
<path d="M142,835 L142,772 L170,772 Q190,772 190,792 Q190,812 170,812 L142,812" fill="none" stroke="#fff" stroke-width="14"/>
<path d="M232,790 L232,840 L280,840 A48,48 0 0 1 232,790 Z" fill="#e8593a" transform="translate(0,-8)"/>
<path d="M262,770 L262,800 L295,800 A33,33 0 0 0 262,770 Z" fill="#f08a70"/>
</svg>
<svg style="left:1580px;top:836px" width="70" height="36" viewBox="0 0 1920 987"><defs><linearGradient id="vbSky" x1="0" x2="0" y1="0" y2="1"><stop offset="0" stop-color="#4f95f5"/><stop offset="0.6" stop-color="#d5ebfb"/></linearGradient></defs>
<rect x="305" y="280" width="157" height="430" rx="14" fill="#fafafa" stroke="#7a7a7a" stroke-width="10"/>
<rect x="355" y="330" width="58" height="50" fill="#3a6a8a"/><rect x="355" y="470" width="58" height="50" fill="#d0902a"/><rect x="355" y="470" width="28" height="25" fill="#3a7ad8"/><rect x="383" y="495" width="30" height="25" fill="#5aa83a"/><rect x="355" y="605" width="58" height="50" fill="#c01818"/>
<g fill="#7f7f7f"><rect x="500" y="333" width="125" height="22"/><rect x="660" y="333" width="135" height="22"/><rect x="500" y="470" width="125" height="22"/><rect x="660" y="470" width="135" height="22"/><rect x="500" y="607" width="125" height="22"/><rect x="660" y="607" width="135" height="22"/></g>
<rect x="1048" y="278" width="485" height="380" fill="#fdfdfd" stroke="#9a9a9a" stroke-width="10"/>
<rect x="1100" y="330" width="380" height="270" fill="url(#vbSky)"/>
<path d="M1100,440 Q1180,420 1260,480 Q1360,520 1480,525 L1480,600 L1100,600 Z" fill="#4d8260"/>
<rect x="1100" y="548" width="380" height="52" fill="#3a72b8"/>
</svg>
<svg style="left:394px;top:160px" width="36" height="34" viewBox="0 0 1092 1031">
<polygon points="150,880 180,830 370,620 440,690 240,880 190,905" fill="#a7b1b7"/>
<polygon points="235,470 330,400 470,400 620,260 640,170 685,125 935,375 890,420 800,440 660,580 660,730 590,825" fill="#98a2a8"/>
</svg>
<div style="left:697px;top:277px;width:526px;height:518px;background:#f0f0f0;box-shadow:0 0 0 1px rgba(0,0,0,.45),0 1px 11px 1px rgba(0,0,0,.45);"></div>
<div style="left:697px;top:277px;width:526px;height:37px;background:#ffffff;"></div>
<span class="t" style="left:731.50px;top:285.53px;font-size:15.5px;color:#999;letter-spacing:-0.390px;">Archive name and parameters</span>
<div style="left:704px;top:345px;width:510px;height:405px;background:#fff;border:1px solid #dcdcdc;"></div>
<div style="left:706px;top:324px;width:55px;height:22px;background:#f0f0f0;border:1px solid #d9d9d9;border-bottom:none;"></div>
<span class="t" style="left:712.30px;top:325.44px;font-size:12px;color:#000;letter-spacing:0.128px;">General</span>
<div style="left:830px;top:324px;width:54px;height:22px;background:#f0f0f0;border:1px solid #d9d9d9;border-bottom:none;"></div>
<span class="t" style="left:835.20px;top:325.44px;font-size:12px;color:#000;letter-spacing:0.234px;">Options</span>
<div style="left:883px;top:324px;width:49px;height:22px;background:#f0f0f0;border:1px solid #d9d9d9;border-bottom:none;"></div>
<span class="t" style="left:889.90px;top:325.44px;font-size:12px;color:#000;letter-spacing:0.211px;">Files</span>
<div style="left:931px;top:324px;width:53px;height:22px;background:#f0f0f0;border:1px solid #d9d9d9;border-bottom:none;"></div>
<span class="t" style="left:938.00px;top:325.44px;font-size:12px;color:#000;letter-spacing:-0.122px;">Backup</span>
<div style="left:983px;top:324px;width:49px;height:22px;background:#f0f0f0;border:1px solid #d9d9d9;border-bottom:none;"></div>
<span class="t" style="left:989.90px;top:325.44px;font-size:12px;color:#000;letter-spacing:0.616px;">Time</span>
<div style="left:1031px;top:324px;width:67px;height:22px;background:#f0f0f0;border:1px solid #d9d9d9;border-bottom:none;"></div>
<span class="t" style="left:1038.30px;top:325.44px;font-size:12px;color:#000;letter-spacing:0.341px;">Comment</span>
<div style="left:760px;top:322px;width:71px;height:25px;background:#fff;border:1px solid #d9d9d9;border-bottom:none;"></div>
<span class="t" style="left:768.20px;top:323.74px;font-size:12px;color:#000;letter-spacing:0.128px;">Advanced</span>
<div style="left:726px;top:369px;width:300px;height:118px;border:1px solid #dcdcdc;"></div>
<div style="left:1040px;top:369px;width:154px;height:61px;border:1px solid #dcdcdc;"></div>
<div style="left:726px;top:510px;width:300px;height:97px;border:1px solid #dcdcdc;"></div>
<div style="left:726px;top:629px;width:300px;height:71px;border:1px solid #dcdcdc;"></div>
<div style="left:1040px;top:629px;width:155px;height:71px;border:1px solid #dcdcdc;"></div>
<span class="t" style="left:735.00px;top:358.84px;font-size:12px;color:#000;letter-spacing:0.137px;background:#fff;">NTFS options</span>
<span class="t" style="left:1030.00px;top:358.84px;font-size:12px;color:#000;letter-spacing:0.331px;background:#fff;">Recovery record</span>
<span class="t" style="left:734.50px;top:499.84px;font-size:12px;color:#000;letter-spacing:-0.362px;background:#fff;">Volumes</span>
<span class="t" style="left:734.50px;top:618.84px;font-size:12px;color:#000;letter-spacing:-0.753px;background:#fff;">System</span>
<div style="left:1100px;top:462px;width:93px;height:26px;background:#e1e1e1;border:1px solid #adadad;"></div>
<div style="left:1100px;top:510px;width:93px;height:26px;background:#e1e1e1;border:1px solid #adadad;"></div>
<div style="left:1050px;top:587px;width:144px;height:24px;background:#e1e1e1;border:1px solid #adadad;"></div>
<svg style="left:1178px;top:596px;" width="11" height="7" viewBox="0 0 11 7"><path d="M0.7 0.7L5.5 5.5L10.3 0.7" fill="none" stroke="#333" stroke-width="1.2"/></svg>
<div style="left:1153px;top:760px;width:63px;height:26px;background:#e1e1e1;border:1px solid #adadad;"></div>
<span class="t" style="left:1160.30px;top:763.64px;font-size:12px;color:#000;letter-spacing:-0.072px;">Help</span>
<span class="t" style="left:1133.00px;top:285.80px;font-size:15px;color:#8a8a8a;letter-spacing:-1.200px;">?</span>
<svg style="left:1186.7px;top:289px;" width="13" height="13" viewBox="0 0 13 13"><path d="M0.5 0.5L12.5 12.5M12.5 0.5L0.5 12.5" stroke="#6a6a6a" stroke-width="1"/></svg>
<svg style="left:700px;top:280px" width="40" height="30" viewBox="0 0 1375 1031"><defs>
<linearGradient id="wrR" x1="0" x2="0" y1="0" y2="1"><stop offset="0" stop-color="#e0407a"/><stop offset=".5" stop-color="#c0183a"/><stop offset="1" stop-color="#7a0a1a"/></linearGradient>
<linearGradient id="wrB" x1="0" x2="0" y1="0" y2="1"><stop offset="0" stop-color="#6a6ad0"/><stop offset=".5" stop-color="#4040b0"/><stop offset="1" stop-color="#282880"/></linearGradient>
<linearGradient id="wrG" x1="0" x2="0" y1="0" y2="1"><stop offset="0" stop-color="#30b050"/><stop offset=".5" stop-color="#108030"/><stop offset="1" stop-color="#064818"/></linearGradient>
<linearGradient id="wrO" x1="0" x2="0" y1="0" y2="1"><stop offset="0" stop-color="#f0c020"/><stop offset=".5" stop-color="#e08018"/><stop offset="1" stop-color="#c04010"/></linearGradient>
</defs>
<rect x="205" y="205" width="687" height="205" fill="url(#wrR)"/>
<rect x="205" y="410" width="687" height="205" fill="url(#wrB)"/>
<rect x="205" y="615" width="687" height="210" fill="url(#wrG)"/>
<rect x="270" y="235" width="38" height="140" fill="#f2b51c"/><rect x="270" y="445" width="38" height="140" fill="#f2b51c"/><rect x="270" y="650" width="38" height="140" fill="#f2b51c"/>
<rect x="445" y="205" width="210" height="620" fill="url(#wrO)"/>
<rect x="415" y="440" width="275" height="170" rx="60" fill="none" stroke="#fff" stroke-width="40"/>
<rect x="470" y="290" width="160" height="150" rx="40" fill="#f5c02a"/>
<rect x="520" y="490" width="50" height="120" fill="#b8c0c8"/>
</svg>
<div style="left:737px;top:368px;width:416px;height:592px;background:#f0f0f0;box-shadow:0 0 0 1px rgba(0,0,0,.42),0 2px 14px 0 rgba(0,0,0,.42);"></div>
<div style="left:737px;top:368px;width:416px;height:37px;background:#ffffff;"></div>
<span class="t" style="left:746.40px;top:377.13px;font-size:15.5px;color:#999;letter-spacing:-0.504px;">Advanced SFX options</span>
<span class="t" style="left:1062.40px;top:376.50px;font-size:15px;color:#8a8a8a;letter-spacing:-1.200px;">?</span>
<svg style="left:1116px;top:379.5px;" width="13" height="13" viewBox="0 0 13 13"><path d="M0.5 0.5L12.5 12.5M12.5 0.5L0.5 12.5" stroke="#6a6a6a" stroke-width="1"/></svg>
<div style="left:744px;top:457px;width:400px;height:459px;background:#fff;border:1px solid #dcdcdc;"></div>
<div style="left:746px;top:415px;width:90px;height:22px;background:#f0f0f0;border:1px solid #d9d9d9;"></div>
<span class="t" style="left:770.20px;top:417.14px;font-size:12px;color:#000;letter-spacing:0.133px;">Update</span>
<div style="left:835px;top:415px;width:128px;height:22px;background:#f0f0f0;border:1px solid #d9d9d9;"></div>
<span class="t" style="left:859.90px;top:417.14px;font-size:12px;color:#000;letter-spacing:0.437px;">Text and icon</span>
<div style="left:962px;top:415px;width:92px;height:22px;background:#f0f0f0;border:1px solid #d9d9d9;"></div>
<span class="t" style="left:987.00px;top:417.14px;font-size:12px;color:#000;letter-spacing:0.032px;">License</span>
<div style="left:1053px;top:415px;width:89px;height:22px;background:#f0f0f0;border:1px solid #d9d9d9;"></div>
<span class="t" style="left:1078.10px;top:417.14px;font-size:12px;color:#000;letter-spacing:0.223px;">Module</span>
<div style="left:848px;top:436px;width:92px;height:22px;background:#f0f0f0;border:1px solid #d9d9d9;border-bottom:none;"></div>
<span class="t" style="left:875.30px;top:438.34px;font-size:12px;color:#000;letter-spacing:0.208px;">Setup</span>
<div style="left:939px;top:436px;width:94px;height:22px;background:#f0f0f0;border:1px solid #d9d9d9;border-bottom:none;"></div>
<span class="t" style="left:968.40px;top:438.34px;font-size:12px;color:#000;letter-spacing:0.134px;">Modes</span>
<div style="left:1032px;top:436px;width:110px;height:22px;background:#f0f0f0;border:1px solid #d9d9d9;border-bottom:none;"></div>
<span class="t" style="left:1061.50px;top:438.34px;font-size:12px;color:#000;letter-spacing:0.066px;">Advanced</span>
<div style="left:744px;top:434px;width:105px;height:24px;background:#fff;border:1px solid #d9d9d9;border-bottom:none;"></div>
<span class="t" style="left:774.50px;top:436.34px;font-size:12px;color:#000;letter-spacing:0.042px;">General</span>
<div style="left:762px;top:481px;width:366px;height:173px;border:1px solid #dcdcdc;"></div>
<div style="left:768px;top:478px;width:89px;height:8px;background:#fff;"></div>
<span class="t" style="left:771.10px;top:472.14px;font-size:12px;color:#000;letter-spacing:0.375px;">Path to extract</span>
<div style="left:774px;top:501px;width:334px;height:24px;background:#fff;border:1px solid #7a7a7a;"></div>
<span class="t" style="left:780.20px;top:502.84px;font-size:12px;color:#000;letter-spacing:0.379px;">C:\Users\Vince\Desktop</span>
<svg style="left:774px;top:541.5px;" width="16" height="16" viewBox="0 0 16 16"><circle cx="8" cy="8" r="7" fill="#fff" stroke="#cccccc" stroke-width="1.1"/></svg>
<svg style="left:774px;top:565px;" width="16" height="16" viewBox="0 0 16 16"><circle cx="8" cy="8" r="7" fill="#fff" stroke="#cccccc" stroke-width="1.1"/></svg>
<svg style="left:774px;top:589px;" width="16" height="16" viewBox="0 0 16 16"><circle cx="8" cy="8" r="7" fill="#fff" stroke="#333" stroke-width="1.1"/><circle cx="8" cy="8" r="4.2" fill="#333"/></svg>
<span class="t" style="left:793.70px;top:540.14px;font-size:12px;color:#6d6d6d;letter-spacing:0.355px;">Create in &quot;Program Files&quot;</span>
<span class="t" style="left:793.70px;top:563.94px;font-size:12px;color:#6d6d6d;letter-spacing:0.438px;">Create in the current folder</span>
<span class="t" style="left:793.70px;top:588.04px;font-size:12px;color:#000;letter-spacing:0.262px;">Absolute path</span>
<div style="left:774px;top:621px;width:16px;height:16px;background:#fff;border:1px solid #333;"></div>
<span class="t" style="left:793.70px;top:619.84px;font-size:12px;color:#000;letter-spacing:0.387px;">Save and restore paths</span>
<div style="left:750px;top:459px;width:385px;height:85px;border:11px solid #ff0000;"></div>
<div style="left:870px;top:926px;width:86px;height:26px;background:#e1e1e1;border:1px solid #adadad;"></div>
<div style="left:965px;top:926px;width:86px;height:26px;background:#e1e1e1;border:1px solid #adadad;"></div>
<div style="left:1060px;top:926px;width:86px;height:26px;background:#e1e1e1;border:1px solid #adadad;"></div>
<span class="t" style="left:905.40px;top:930.64px;font-size:12px;color:#000;letter-spacing:-1.072px;">OK</span>
<span class="t" style="left:989.30px;top:930.64px;font-size:12px;color:#000;letter-spacing:0.040px;">Cancel</span>
<span class="t" style="left:1090.20px;top:930.64px;font-size:12px;color:#000;letter-spacing:-0.097px;">Help</span>
</body></html>
